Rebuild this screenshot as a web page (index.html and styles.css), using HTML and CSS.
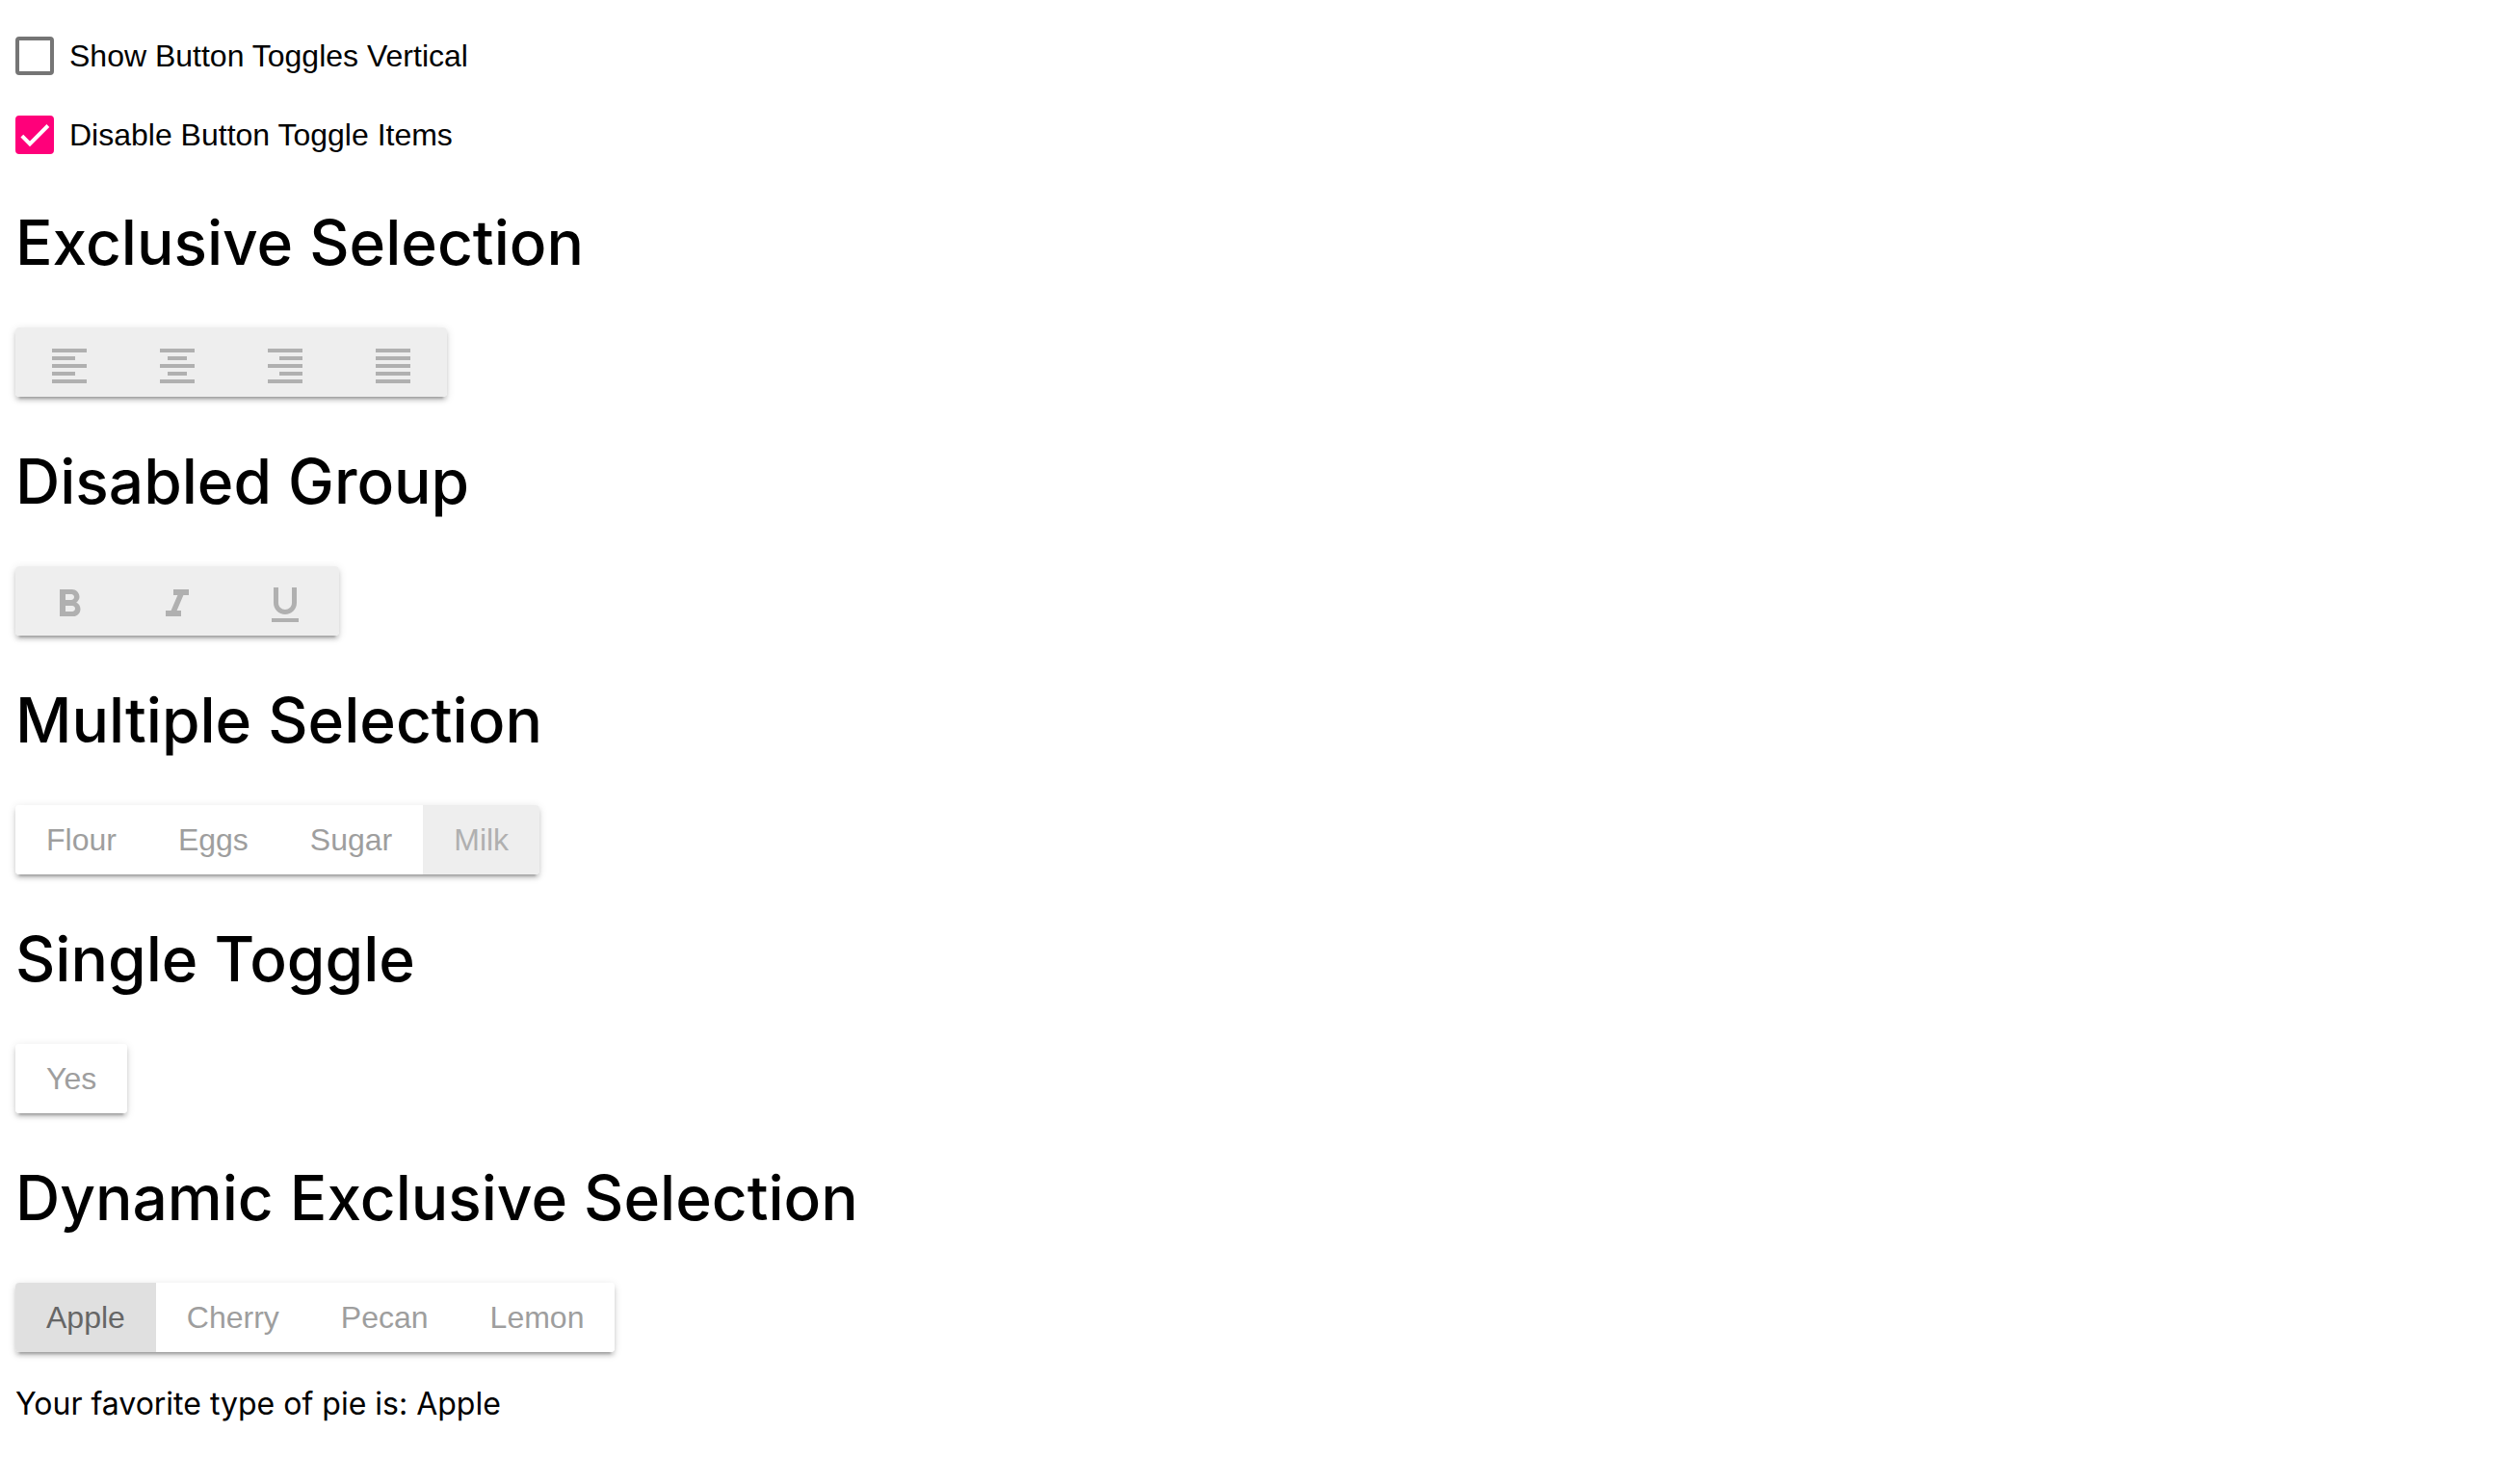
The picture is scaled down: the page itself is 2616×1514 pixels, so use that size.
FILE: index.html
```html
<!DOCTYPE html>
<html lang="en">
<head>
<meta charset="utf-8">
<title>Button Toggle</title>
<link rel="stylesheet" href="styles.css">
</head>
<body>
<main class="demo">
  <div class="options">
    <label class="option">
      <span class="checkbox">
        <input class="checkbox-input" type="checkbox">
        <svg class="checkbox-mark" viewBox="0 0 24 24" aria-hidden="true"><path d="M4.1 12.7 9 17.6 20.3 6.3"/></svg>
      </span>
      Show Button Toggles Vertical
    </label>
    <label class="option">
      <span class="checkbox">
        <input class="checkbox-input" type="checkbox" checked>
        <svg class="checkbox-mark" viewBox="0 0 24 24" aria-hidden="true"><path d="M4.1 12.7 9 17.6 20.3 6.3"/></svg>
      </span>
      Disable Button Toggle Items
    </label>
  </div>

  <h1>Exclusive Selection</h1>
  <div class="toggle-group" role="group" aria-label="Text alignment">
    <button class="toggle toggle-off" disabled aria-label="Left"><svg class="icon" viewBox="0 0 24 24"><path d="M15 15H3v2h12v-2zm0-8H3v2h12V7zM3 13h18v-2H3v2zm0 8h18v-2H3v2zM3 3v2h18V3H3z"/></svg></button>
    <button class="toggle toggle-off" disabled aria-label="Center"><svg class="icon" viewBox="0 0 24 24"><path d="M7 15v2h10v-2H7zm-4 6h18v-2H3v2zm0-8h18v-2H3v2zm4-6v2h10V7H7zM3 3v2h18V3H3z"/></svg></button>
    <button class="toggle toggle-off" disabled aria-label="Right"><svg class="icon" viewBox="0 0 24 24"><path d="M3 21h18v-2H3v2zm6-4h12v-2H9v2zm-6-4h18v-2H3v2zm6-4h12V7H9v2zM3 3v2h18V3H3z"/></svg></button>
    <button class="toggle toggle-off" disabled aria-label="Justify"><svg class="icon" viewBox="0 0 24 24"><path d="M3 21h18v-2H3v2zm0-4h18v-2H3v2zm0-4h18v-2H3v2zm0-4h18V7H3v2zm0-6v2h18V3H3z"/></svg></button>
  </div>

  <h1>Disabled Group</h1>
  <div class="toggle-group" role="group" aria-label="Text style">
    <button class="toggle toggle-off" disabled aria-label="Bold"><svg class="icon" viewBox="0 0 24 24"><path d="M15.600 10.790c.97-.67 1.650-1.770 1.650-2.790 0-2.260-1.750-4-4-4H7v14h7.040c2.090 0 3.710-1.700 3.710-3.790 0-1.520-.86-2.820-2.150-3.420zM10 6.500h3c.83 0 1.500.67 1.500 1.500s-.67 1.500-1.500 1.500h-3v-3zm3.500 9H10v-3h3.500c.83 0 1.500.67 1.500 1.500s-.67 1.500-1.500 1.500z"/></svg></button>
    <button class="toggle toggle-off" disabled aria-label="Italic"><svg class="icon" viewBox="0 0 24 24"><path d="M10 4v3h2.210l-3.420 8H6v3h8v-3h-2.210l3.420-8H18V4z"/></svg></button>
    <button class="toggle toggle-off" disabled aria-label="Underline"><svg class="icon" viewBox="0 0 24 24"><path d="M12 17c3.310 0 6-2.690 6-6V3h-2.500v8c0 1.930-1.570 3.500-3.500 3.500S8.500 12.930 8.500 11V3H6v8c0 3.310 2.690 6 6 6zm-7 2v2h14v-2H5z"/></svg></button>
  </div>

  <h1>Multiple Selection</h1>
  <div class="toggle-group" role="group" aria-label="Ingredients">
    <button class="toggle" disabled>Flour</button>
    <button class="toggle" disabled>Eggs</button>
    <button class="toggle" disabled>Sugar</button>
    <button class="toggle toggle-off" disabled>Milk</button>
  </div>

  <h1>Single Toggle</h1>
  <div class="toggle-group">
    <button class="toggle" disabled>Yes</button>
  </div>

  <h1>Dynamic Exclusive Selection</h1>
  <div class="toggle-group" role="group" aria-label="Pie">
    <button class="toggle toggle-checked" disabled aria-pressed="true">Apple</button>
    <button class="toggle" disabled>Cherry</button>
    <button class="toggle" disabled>Pecan</button>
    <button class="toggle" disabled>Lemon</button>
  </div>
  <p class="result">Your favorite type of pie is: Apple</p>
</main>
</body>
</html>
```
FILE: styles.css
```css
* {
  box-sizing: border-box;
}

body {
  margin: 0;
  background: #fff;
  color: #000;
  font: 32px/44px Inter, "Liberation Sans", sans-serif;
}

.demo {
  padding: 34px 16px 0;
}

.options {
  display: flex;
  flex-direction: column;
  align-items: flex-start;
  gap: 34px;
}

.option {
  display: flex;
  align-items: center;
  gap: 16px;
  height: 48px;
  font-family: "Liberation Sans", Arial, sans-serif;
}

.checkbox {
  display: grid;
  width: 40px;
  height: 40px;
}

.checkbox-input,
.checkbox-mark {
  grid-area: 1 / 1;
  width: 40px;
  height: 40px;
}

.checkbox-input {
  appearance: none;
  margin: 0;
  border: 4px solid #757575;
  border-radius: 4px;
}

.checkbox-input:checked {
  border-color: #ff007a;
  background: #ff007a;
}

.checkbox-mark {
  visibility: hidden;
  fill: none;
  stroke: #fff;
  stroke-width: 2.4;
  pointer-events: none;
}

.checkbox-input:checked + .checkbox-mark {
  visibility: visible;
}

h1 {
  margin: 43px 0;
  font-size: 64px;
  font-weight: 500;
  line-height: 90px;
}

.toggle-group {
  display: flex;
  width: fit-content;
  border-radius: 4px;
  overflow: hidden;
  box-shadow: 0 6px 2px -4px rgba(0, 0, 0, 0.2), 0 4px 4px rgba(0, 0, 0, 0.14), 0 2px 10px rgba(0, 0, 0, 0.12);
}

.toggle {
  display: flex;
  align-items: center;
  height: 72px;
  padding: 0 32px;
  border: 0;
  background: #fff;
  color: #9e9e9e;
  font: 32px/72px "Liberation Sans", Arial, sans-serif;
}

.toggle-off {
  background: #eee;
  color: #b0b0b0;
}

.toggle-checked {
  background: #e0e0e0;
  color: #666;
}

.icon {
  width: 48px;
  height: 48px;
  margin-top: 8px;
  fill: currentColor;
}

.result {
  margin: 32px 0;
}
```
